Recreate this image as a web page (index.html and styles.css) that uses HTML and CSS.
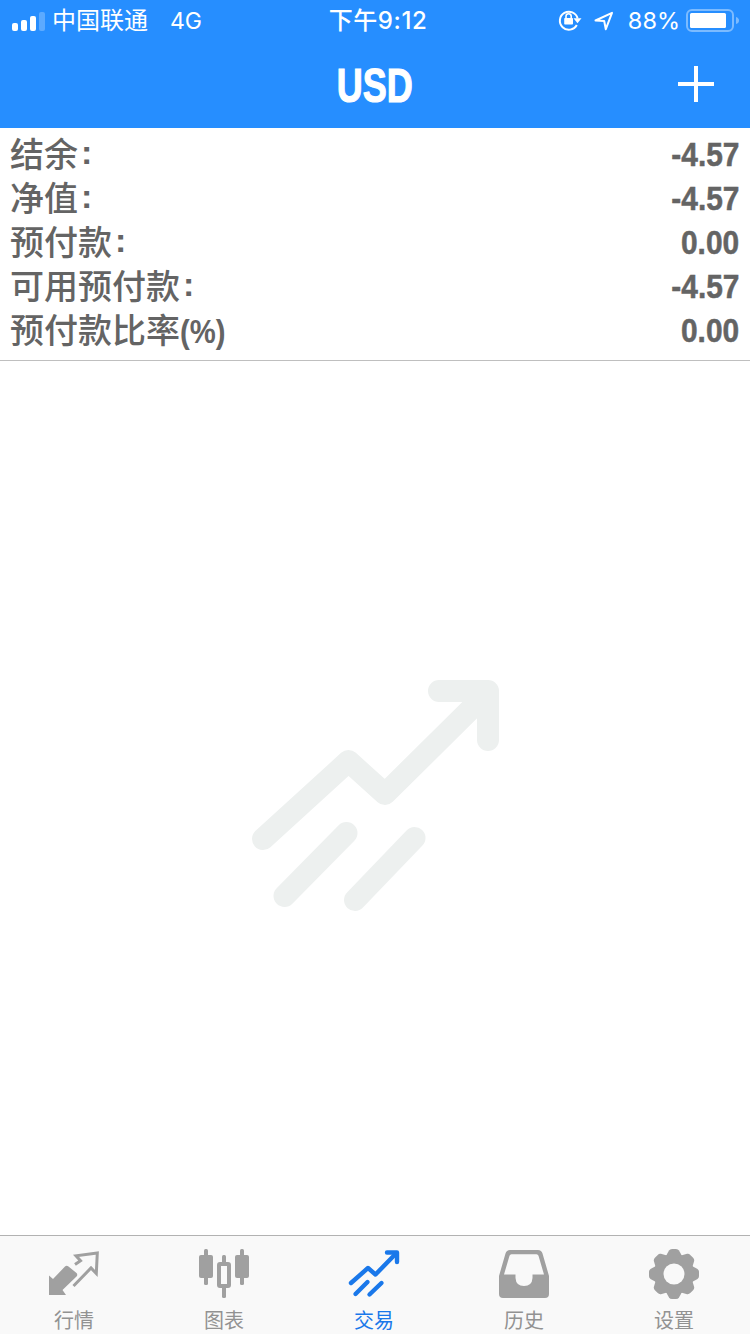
FILE: index.html
```html
<!DOCTYPE html>
<html lang="zh-CN">
<head>
    <meta charset="UTF-8">
    <meta name="viewport" content="width=device-width, initial-scale=1.0">
    <title>交易</title>
    <link rel="stylesheet" href="styles.css">
</head>
<body>
    <header>
        <div class="status_bar">
            <div class="status_left">
                <svg class="signal" width="34" height="18" viewBox="0 0 34 18" fill="white">
                    <rect x="0" y="10" width="6" height="8" rx="2"/>
                    <rect x="9" y="7" width="6" height="11" rx="2"/>
                    <rect x="18" y="3" width="6" height="15" rx="2"/>
                    <rect x="27" y="-1" width="6" height="19" rx="2" opacity="0.25"/>
                </svg>
                <span class="carrier">中国联通</span>
                <span class="network">4G</span>
            </div>
            <div class="status_time">下午9:12</div>
            <div class="status_right">
                <svg class="lock_icon" width="24" height="22" viewBox="0 0 24 22" fill="none" stroke="white" stroke-width="2">
                    <path d="M18.800 16A9 9 0 1 1 19.600 9.500"/>
                    <path d="M15.500 9.300h8l-4 4.900z" fill="white" stroke="none"/>
                    <rect x="6.200" y="9" width="8.800" height="6.500" rx="0.800" fill="white" stroke="none"/>
                    <path d="M8 10V7.300a2.600 2.600 0 0 1 5.200 0V10" stroke-width="1.600"/>
                </svg>
                <svg class="location_icon" width="20" height="20" viewBox="0 0 20 20" fill="none" stroke="white" stroke-width="2" stroke-linejoin="round">
                    <path d="M1.500 9.500L18 1.800L11.800 18.200L10.200 10z"/>
                </svg>
                <span class="percent">88%</span>
                <svg class="battery" width="53" height="24" viewBox="0 0 53 24">
                    <rect x="1" y="1" width="46" height="21" rx="5" fill="none" stroke="white" stroke-width="2" opacity="0.4"/>
                    <rect x="4" y="4" width="36" height="15" rx="1.500" fill="white"/>
                    <path d="M50 8q3 1 3 3.500t-3 3.500z" fill="white" opacity="0.4"/>
                </svg>
            </div>
        </div>
        <div class="title_bar">
            <h1 class="page_title">USD</h1>
            <button type="button" class="add_button">
                <svg width="36" height="36" viewBox="0 0 36 36" fill="white">
                    <rect x="0" y="16" width="36" height="4"/>
                    <rect x="16" y="0" width="4" height="36"/>
                </svg>
            </button>
        </div>
    </header>

    <section class="account">
        <div class="account_row"><span class="label">结余<i class="colon">:</i></span><b class="value">-4.57</b></div>
        <div class="account_row"><span class="label">净值<i class="colon">:</i></span><b class="value">-4.57</b></div>
        <div class="account_row"><span class="label">预付款<i class="colon">:</i></span><b class="value">0.00</b></div>
        <div class="account_row"><span class="label">可用预付款<i class="colon">:</i></span><b class="value">-4.57</b></div>
        <div class="account_row"><span class="label">预付款比率<b class="unit">(%)</b></span><b class="value">0.00</b></div>
    </section>

    <main>
        <svg width="248" height="232" viewBox="0 0 248 232" fill="none" stroke="#edf0ef" stroke-width="22" stroke-linecap="round" stroke-linejoin="round">
            <path d="M12 159L97.500 81L134 114L235 14"/>
            <path d="M188 11H237V60"/>
            <path d="M95.500 153L33.500 216"/>
            <path d="M163.500 158L104 220"/>
        </svg>
    </main>

    <nav>
        <a class="tab">
            <svg width="52" height="50" viewBox="0 0 52 50">
                <path d="M1 25.500L5 29L17 16.500Q18.500 15 20.500 16.500L28.500 23Q30 24.500 28.500 26.500L14.500 40L18 45H1z" fill="#a0a0a0"/>
                <path d="M27 14.500L32.500 10.800L28 5.800L49.300 3L48.300 23.500L43 18L25.500 36" fill="none" stroke="#a0a0a0" stroke-width="3"/>
            </svg>
            <span>行情</span>
        </a>
        <a class="tab">
            <svg width="52" height="50" viewBox="0 0 52 50" fill="#a0a0a0">
                <rect x="1" y="5" width="14" height="23" rx="2"/>
                <rect x="6" y="-1" width="4" height="36" rx="1.500"/>
                <rect x="37" y="5" width="14" height="23" rx="2"/>
                <rect x="42" y="-1" width="4" height="36" rx="1.500"/>
                <rect x="24" y="5" width="4" height="9" rx="1.500"/>
                <rect x="24" y="36" width="4" height="12" rx="1.500"/>
                <rect x="21" y="14" width="10" height="22" rx="1" fill="none" stroke="#a0a0a0" stroke-width="4"/>
            </svg>
            <span>图表</span>
        </a>
        <a class="tab active">
            <svg width="52" height="50" viewBox="0 0 52 50" fill="none" stroke="#1a78ea" stroke-width="4.400" stroke-linecap="round" stroke-linejoin="round">
                <path d="M3 33L20 18L27.500 24.500L48 3.500"/>
                <path d="M39 2.500H49V12"/>
                <path d="M19.500 32L7.500 44"/>
                <path d="M33.500 33L21.500 44.500"/>
            </svg>
            <span>交易</span>
        </a>
        <a class="tab">
            <svg width="52" height="50" viewBox="0 0 52 50">
                <path d="M12 0H40Q43.500 0 44.500 3.500L51 26V44Q51 48 47 48H5Q1 48 1 44V26L7.500 3.500Q8.500 0 12 0z" fill="#a0a0a0"/>
                <path d="M13.500 4.300H38.500Q40 4.300 40.500 5.800L46 24.500H34.500V28Q34 36 26 36T17.500 28V24.500H6L11.500 5.800Q12 4.300 13.500 4.300z" fill="#f9f9f9"/>
            </svg>
            <span>历史</span>
        </a>
        <a class="tab">
            <svg width="52" height="50" viewBox="0 0 52 50">
                <g fill="#a0a0a0">
                    <circle cx="26" cy="24" r="20"/>
                    <path id="teeth" d="M18 6L21 0.500Q22 -1 24 -1H28Q30 -1 31 0.500L34 6V42L31 47.500Q30 49 28 49H24Q22 49 21 47.500L18 42z"/>
                    <use href="#teeth" transform="rotate(45 26 24)"/>
                    <use href="#teeth" transform="rotate(90 26 24)"/>
                    <use href="#teeth" transform="rotate(135 26 24)"/>
                </g>
                <circle cx="26" cy="24" r="10.500" fill="#f9f9f9"/>
            </svg>
            <span>设置</span>
        </a>
    </nav>
</body>
</html>
```

FILE: styles.css
```css
/* General */
*{
    box-sizing: border-box;
}
body{
    display: flex;
    flex-direction: column;
    width: 750px;
    height: 1334px;
    margin: 0px;
    background-color: white;
    font-family: "Liberation Sans", "Noto Sans CJK SC", sans-serif;
    overflow: hidden;
}
svg{
    display: block;
    overflow: visible;
    flex: none;
}

/* Header */
header{
    height: 128px;
    background-color: #268eff;
    color: white;
}
.status_bar{
    display: grid;
    grid-template-columns: 1fr auto 1fr;
    align-items: center;
    height: 42px;
    padding: 0px 11px 0px 12px;
    font-family: Inter, "Noto Sans CJK SC", sans-serif;
    font-size: 24px;
    line-height: 42px;
    white-space: nowrap;
}
.status_left, .status_right{
    display: flex;
    align-items: center;
}
.status_right{
    justify-content: flex-end;
}
.signal{
    margin-top: 1px;
}
.carrier{
    margin-left: 6px;
    font-weight: 400;
}
.network{
    margin-left: 22px;
    font-size: 23px;
    font-weight: 400;
}
.status_time{
    padding-left: 5px;
    font-weight: 500;
    letter-spacing: 0.6px;
}
.lock_icon{
    margin-bottom: 2px;
}
.location_icon{
    margin-left: 12px;
}
.percent{
    margin-left: 14px;
    font-size: 23.500px;
    font-weight: 400;
}
.battery{
    margin-left: 6px;
}
.title_bar{
    display: grid;
    grid-template-columns: 1fr auto 1fr;
    align-items: center;
    height: 86px;
    padding-right: 36px;
    padding-left: 36px;
}
.page_title{
    grid-column: 2;
    margin: 0px;
    padding-top: 1px;
    font-size: 48px;
    line-height: 86px;
    transform: scaleX(0.75);
    -webkit-text-stroke: 1.200px white;
}
.add_button{
    justify-self: end;
    margin: 0px 0px 4px;
    padding: 0px;
    border: none;
    background: none;
    cursor: pointer;
}

/* Account */
.account{
    padding: 4px 11px 8px 10px;
    border-bottom: 1px solid #bfbfbf;
    color: #646464;
}
.account_row{
    display: flex;
    justify-content: space-between;
    height: 44px;
    font-size: 34px;
    font-weight: 500;
    line-height: 44px;
}
.label{
    padding-top: 1px;
}
.colon{
    margin-left: 3px;
    font-style: normal;
    font-weight: bold;
    line-height: 0;
    vertical-align: 3px;
}
.value, .unit{
    display: inline-block;
    font-weight: bold;
    transform: scaleX(0.88);
    transform-origin: right;
    -webkit-text-stroke: 0.500px #646464;
}
.unit{
    transform: scaleX(0.86);
    transform-origin: left;
    -webkit-text-stroke: 0px;
}

/* Empty list */
main{
    flex: 1;
    display: flex;
    justify-content: center;
    align-items: center;
    padding-bottom: 4px;
}

/* Tabs */
nav{
    display: flex;
    height: 99px;
    border-top: 1px solid #b2b2b2;
    background-color: #f9f9f9;
}
.tab{
    flex: 1;
    display: flex;
    flex-direction: column;
    align-items: center;
    padding: 14px 2px 0px 0px;
    color: #929292;
    font-size: 20px;
    line-height: 28px;
}
.tab span{
    margin-top: 7px;
}
.active{
    color: #1a78ea;
}
```
